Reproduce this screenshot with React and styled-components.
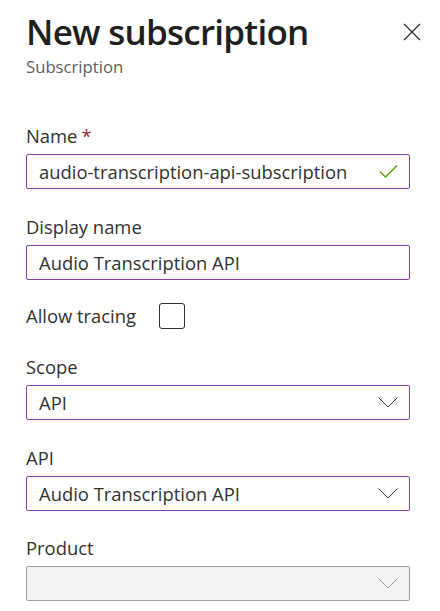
import React from "react";
import styled, { createGlobalStyle } from "styled-components";

const Global = createGlobalStyle`
  html, body { margin: 0; padding: 0; background: #fff; }
  body { font-family: "Open Sans", "Noto Sans", sans-serif; color: #323130; }
  * { box-sizing: border-box; }
`;

const Panel = styled.div`
  width: 440px;
  height: 611px;
  overflow: hidden;
  padding: 0 30px 0 26px;
  display: flex;
  flex-direction: column;
`;

const Header = styled.div`
  display: flex;
  justify-content: space-between;
  align-items: flex-start;
`;

const TitleBlock = styled.div`
  display: flex;
  flex-direction: column;
`;

const Title = styled.h1`
  margin: 8px 0 0;
  font-size: 35px;
  font-weight: 600;
  line-height: 48px;
  color: #201f1e;
  letter-spacing: -0.75px;
`;

const Subtitle = styled.div`
  font-size: 16.7px;
  line-height: 22px;
  color: #605e5c;
  margin-top: 0;
`;

const CloseButton = styled.button`
  border: none;
  background: none;
  padding: 0;
  margin: 22px -12px 0 0;
  width: 20px;
  height: 20px;
  display: flex;
  cursor: pointer;
`;

const Form = styled.div`
  display: flex;
  flex-direction: column;
  margin-top: 46px;
`;

const Field = styled.div`
  display: flex;
  flex-direction: column;
  margin-bottom: ${(p) => p.$gap ?? 25.5}px;
`;

const Label = styled.label`
  font-size: 18.4px;
  line-height: 24px;
  color: #323130;
  margin-bottom: ${(p) => (p.$inline ? 0 : 6)}px;
`;

const Required = styled.span`
  color: #a4262c;
  margin-left: 4px;
`;

const Box = styled.div`
  height: 35px;
  width: 384px;
  border: 1px solid ${(p) => (p.$disabled ? "#a19f9d" : "#8a3ea9")};
  background: ${(p) => (p.$disabled ? "#f3f2f1" : "#fff")};
  border-radius: 2px;
  display: flex;
  align-items: center;
  justify-content: space-between;
  padding: 0 11px 0 12px;
`;

const Value = styled.span`
  font-size: 18.4px;
  color: #323130;
  white-space: nowrap;
`;

const InlineRow = styled.div`
  display: flex;
  align-items: center;
  gap: 23px;
  margin-bottom: 26px;
`;

const Checkbox = styled.div`
  width: 26px;
  height: 26px;
  border: 1px solid #323130;
  border-radius: 3px;
`;

const Chevron = ({ color = "#323130" }) => (
  <svg width="20" height="11" viewBox="0 0 20 11">
    <path d="M0.5 0.5 L10 10 L19.5 0.5" fill="none" stroke={color} strokeWidth="1" />
  </svg>
);

const Check = () => (
  <svg width="19" height="15" viewBox="0 0 19 15">
    <path d="M1 7.5 L6.5 13 L18 1.5" fill="none" stroke="#57a300" strokeWidth="1.5" />
  </svg>
);

const CloseIcon = () => (
  <svg width="20" height="20" viewBox="0 0 20 20">
    <path d="M2 2 L18 18 M18 2 L2 18" stroke="#323130" strokeWidth="1.3" />
  </svg>
);

export default function App() {
  return (
    <>
      <Global />
      <Panel>
        <Header>
          <TitleBlock>
            <Title>New subscription</Title>
            <Subtitle>Subscription</Subtitle>
          </TitleBlock>
          <CloseButton aria-label="Close">
            <CloseIcon />
          </CloseButton>
        </Header>
        <Form>
          <Field>
            <Label>
              Name<Required>*</Required>
            </Label>
            <Box>
              <Value>audio-transcription-api-subscription</Value>
              <Check />
            </Box>
          </Field>
          <Field $gap={23.5}>
            <Label>Display name</Label>
            <Box>
              <Value>Audio Transcription API</Value>
            </Box>
          </Field>
          <InlineRow>
            <Label as="span" $inline>Allow tracing</Label>
            <Checkbox />
          </InlineRow>
          <Field>
            <Label>Scope</Label>
            <Box>
              <Value>API</Value>
              <Chevron />
            </Box>
          </Field>
          <Field>
            <Label>API</Label>
            <Box>
              <Value>Audio Transcription API</Value>
              <Chevron />
            </Box>
          </Field>
          <Field>
            <Label>Product</Label>
            <Box $disabled>
              <Value />
              <Chevron color="#a19f9d" />
            </Box>
          </Field>
        </Form>
      </Panel>
    </>
  );
}
